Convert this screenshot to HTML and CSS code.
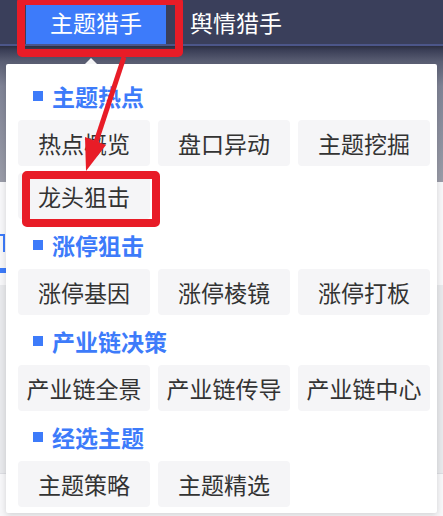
FILE: index.html
```html
<!DOCTYPE html>
<html lang="zh-CN">
<head>
  <meta charset="UTF-8">
  <meta name="viewport" content="width=device-width, initial-scale=1.0">
  <title>主题猎手</title>
  <link rel="stylesheet" href="styles.css">
</head>
<body>

  <!-- 顶部导航 -->
  <div class="topbar">
    <div class="tab activo">主题猎手</div>
    <div class="tab">舆情猎手</div>
  </div>

  <!-- 页面背景（被遮罩） -->
  <div class="pagina">
    <div class="pagina-cabecera"></div>
    <div class="pagina-cuerpo">
      <div class="pestana"></div>
      <div class="pestana-linea"></div>
      <div class="bloque-gris"></div>
    </div>
  </div>

  <!-- 下拉菜单 -->
  <div class="menu">
    <div class="grupo-titulo">主题热点</div>
    <div class="grupo">
      <div class="item">热点概览</div>
      <div class="item">盘口异动</div>
      <div class="item">主题挖掘</div>
      <div class="item">龙头狙击</div>
    </div>

    <div class="grupo-titulo">涨停狙击</div>
    <div class="grupo">
      <div class="item">涨停基因</div>
      <div class="item">涨停棱镜</div>
      <div class="item">涨停打板</div>
    </div>

    <div class="grupo-titulo">产业链决策</div>
    <div class="grupo">
      <div class="item">产业链全景</div>
      <div class="item">产业链传导</div>
      <div class="item">产业链中心</div>
    </div>

    <div class="grupo-titulo">经选主题</div>
    <div class="grupo">
      <div class="item">主题策略</div>
      <div class="item">主题精选</div>
    </div>
  </div>

  <!-- 标注 -->
  <div class="marca marca-tab"></div>
  <div class="marca marca-item"></div>
  <svg class="flecha" width="443" height="516" viewBox="0 0 443 516">
    <line x1="124" y1="57" x2="96" y2="142" stroke="#e81c27" stroke-width="5"/>
    <polygon points="86,171 85,137 106,145" fill="#e81c27"/>
  </svg>

</body>
</html>
```

FILE: styles.css
```css
body {
  margin: 0;
  width: 443px;
  height: 516px;
  overflow: hidden;
  position: relative;
  font-family: "Noto Sans CJK SC", "Noto Sans", sans-serif;
  background-color: #f3f4f7;
}

.topbar {
  display: flex;
  height: 44px;
  padding-left: 26px;
  background-color: #3a3f5b;
  border-bottom: 2px solid #4c5689;
}

.tab {
  width: 140px;
  line-height: 44px;
  text-align: center;
  font-size: 23px;
  color: #fff;
}

.tab.activo {
  background-color: #3d7bfa;
}

.pagina-cabecera {
  height: 136px;
  background: linear-gradient(#2b2e40 0, #3a3e56 4px, #5b5f74 16px, #7f8395 40px, #9a9ca8 100%);
}

.pagina-cuerpo {
  background-color: #f7f7f9;
  height: 334px;
  padding-top: 52px;
  box-sizing: border-box;
}

.pestana {
  width: 5px;
  height: 18px;
  border-top: 2px solid #3d7bfa;
  border-right: 2px solid #3d7bfa;
  box-sizing: border-box;
}

.pestana-linea {
  width: 30px;
  height: 5px;
  margin-top: 16px;
  background-color: #3d7bfa;
}

.bloque-gris {
  height: 188px;
  margin-top: 12px;
  background-color: #e8e9ec;
  border-bottom: 1px solid #dcdde2;
}

/* menú desplegable */
.menu {
  position: absolute;
  left: 6px;
  top: 64px;
  width: 431px;
  box-sizing: border-box;
  padding: 6px 7px 6px 12px;
  background-color: #fff;
  border-radius: 2px;
  box-shadow: 0 2px 6px rgba(0,0,0,0.15);
}

.menu::before {
  content: "";
  position: absolute;
  left: 79px;
  top: -6px;
  border-left: 6px solid transparent;
  border-right: 6px solid transparent;
  border-bottom: 6px solid #f4f4f6;
}

.grupo-titulo {
  display: flex;
  align-items: center;
  gap: 9px;
  height: 50px;
  padding: 2px 0 0 15px;
  box-sizing: border-box;
  font-size: 23px;
  font-weight: bold;
  color: #3d7bfa;
}

.grupo-titulo::before {
  content: "";
  width: 10px;
  height: 10px;
  background-color: #3d7bfa;
}

.grupo {
  display: grid;
  grid-template-columns: repeat(3, 132px);
  gap: 7px 8px;
}

.item {
  height: 46px;
  display: flex;
  align-items: center;
  justify-content: center;
  background-color: #f5f5f7;
  border-radius: 4px;
  font-size: 23px;
  color: #333;
}

/* anotaciones */
.marca {
  position: absolute;
  border: 8px solid #e81c27;
  border-radius: 5px;
  box-sizing: border-box;
}

.marca-tab {
  left: 17px;
  top: -3px;
  width: 166px;
  height: 60px;
}

.marca-item {
  left: 22px;
  top: 171px;
  width: 138px;
  height: 56px;
}

.flecha {
  position: absolute;
  left: 0;
  top: 0;
  pointer-events: none;
}
```
